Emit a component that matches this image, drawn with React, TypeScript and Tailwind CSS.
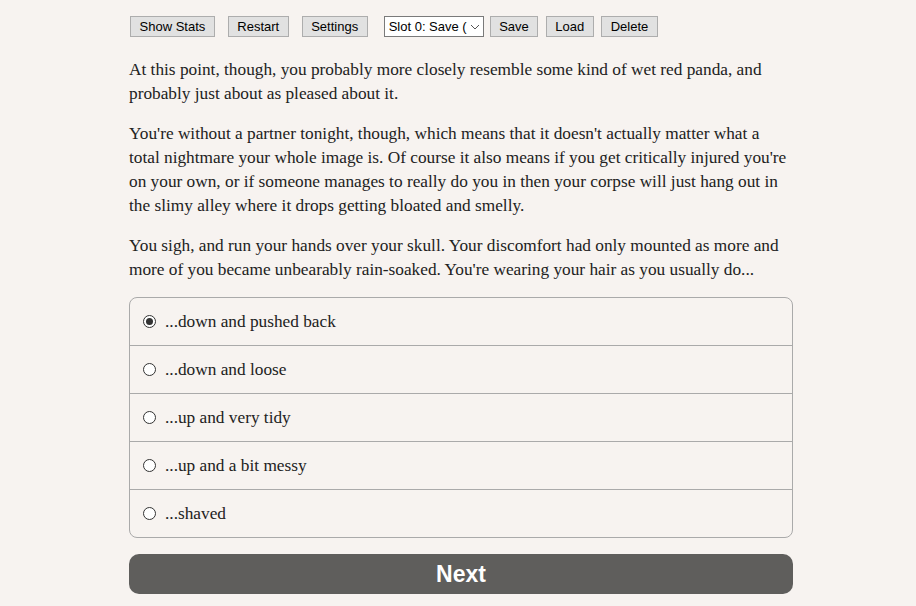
import { useState } from 'react';

const choices = [
  '...down and pushed back',
  '...down and loose',
  '...up and very tidy',
  '...up and a bit messy',
  '...shaved',
];

function ToolButton({ label }: { label: string }) {
  return (
    <button className="h-[21px] border border-[#adadad] bg-[#e1e1e1] px-[8.5px] text-[13px] leading-none text-black">
      {label}
    </button>
  );
}

export default function App() {
  const [picked, setPicked] = useState(0);

  return (
    <div className="min-h-[606px] bg-[#f7f3f0] font-['Liberation_Serif',serif] text-[#222]">
      <div className="ml-[129px] w-[664px] pt-[16px]">
        {/* Toolbar */}
        <div className="flex items-center font-['Liberation_Sans',Arial,sans-serif]">
          <div className="ml-[1px] flex gap-[13px]">
            <ToolButton label="Show Stats" />
            <ToolButton label="Restart" />
            <ToolButton label="Settings" />
          </div>
          <div className="ml-[16px] flex h-[21px] w-[100px] items-center justify-between border border-[#7a7a7a] bg-white pl-[4px] pr-[3px] text-[13px] text-black">
            <span className="overflow-hidden whitespace-nowrap">Slot 0: Save (</span>
            <svg width="10" height="6" viewBox="0 0 10 6" className="shrink-0">
              <path d="M1 1l4 4 4-4" fill="none" stroke="#555" strokeWidth="1" />
            </svg>
          </div>
          <div className="ml-[6px] flex gap-[7.5px]">
            <ToolButton label="Save" />
            <ToolButton label="Load" />
            <ToolButton label="Delete" />
          </div>
        </div>

        {/* Passage */}
        <div className="mt-[21px] space-y-[16px] text-[17.3px] leading-[24px]">
          <p>
            At this point, though, you probably more closely resemble some kind of wet red panda, and
            probably just about as pleased about it.
          </p>
          <p>
            You're without a partner tonight, though, which means that it doesn't actually matter what a
            total nightmare your whole image is. Of course it also means if you get critically injured you're
            on your own, or if someone manages to really do you in then your corpse will just hang out in
            the slimy alley where it drops getting bloated and smelly.
          </p>
          <p>
            You sigh, and run your hands over your skull. Your discomfort had only mounted as more and
            more of you became unbearably rain-soaked. You're wearing your hair as you usually do...
          </p>
        </div>

        {/* Choices */}
        <div className="mt-[15px] overflow-hidden rounded-[8px] border border-[#aaa]">
          {choices.map((c, i) => (
            <label
              key={i}
              className={`flex cursor-pointer items-center gap-[9px] pl-[13px] text-[17.3px] ${
                i > 0 ? 'h-[48px] border-t border-[#aaa]' : 'h-[47px]'
              }`}
              onClick={() => setPicked(i)}
            >
              <span className="flex h-[13px] w-[13px] items-center justify-center rounded-full border border-[#333] bg-white">
                {picked === i && <span className="h-[7px] w-[7px] rounded-full bg-[#333]" />}
              </span>
              <span>{c}</span>
            </label>
          ))}
        </div>

        {/* Next */}
        <button className="mt-[16px] flex h-[40px] w-full items-center justify-center rounded-[10px] bg-[#5f5e5c] font-['Liberation_Sans',Arial,sans-serif] text-[23px] font-bold text-white">
          Next
        </button>
      </div>
    </div>
  );
}
